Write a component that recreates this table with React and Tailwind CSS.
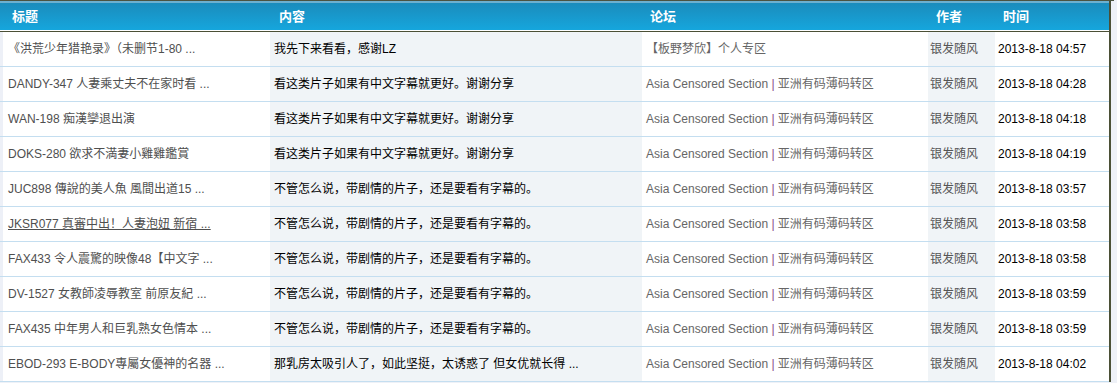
import React from 'react';

const rows = [
  { title: '《洪荒少年猎艳录》（未删节1-80 ...', content: '我先下来看看，感谢LZ', forum: '【板野梦欣】个人专区', time: '2013-8-18 04:57' },
  { title: 'DANDY-347 人妻乘丈夫不在家时看 ...', content: '看这类片子如果有中文字幕就更好。谢谢分享', forum: 'asia', time: '2013-8-18 04:28' },
  { title: 'WAN-198 痴漢孿退出演', content: '看这类片子如果有中文字幕就更好。谢谢分享', forum: 'asia', time: '2013-8-18 04:18' },
  { title: 'DOKS-280 欲求不満妻小雞雞鑑賞', content: '看这类片子如果有中文字幕就更好。谢谢分享', forum: 'asia', time: '2013-8-18 04:19' },
  { title: 'JUC898 傳說的美人魚 風間出道15 ...', content: '不管怎么说，带剧情的片子，还是要看有字幕的。', forum: 'asia', time: '2013-8-18 03:57' },
  { title: 'JKSR077 真審中出！人妻泡妞 新宿 ...', content: '不管怎么说，带剧情的片子，还是要看有字幕的。', forum: 'asia', time: '2013-8-18 03:58', hover: true },
  { title: 'FAX433 令人震驚的映像48【中文字 ...', content: '不管怎么说，带剧情的片子，还是要看有字幕的。', forum: 'asia', time: '2013-8-18 03:58' },
  { title: 'DV-1527 女教師凌辱教室 前原友紀 ...', content: '不管怎么说，带剧情的片子，还是要看有字幕的。', forum: 'asia', time: '2013-8-18 03:59' },
  { title: 'FAX435 中年男人和巨乳熟女色情本 ...', content: '不管怎么说，带剧情的片子，还是要看有字幕的。', forum: 'asia', time: '2013-8-18 03:59' },
  { title: 'EBOD-293 E-BODY專屬女優神的名器 ...', content: '那乳房太吸引人了，如此坚挺，太诱惑了 但女优就长得 ...', forum: 'asia', time: '2013-8-18 04:02' },
];

export default function App() {
  return (
    <div className="w-[1117px] h-[383px] overflow-hidden bg-[#eef1f7] text-[12px] font-['Liberation_Sans','Noto_Sans_CJK_SC',sans-serif]">
      <div className="flex w-[1114px] border-t border-[#4b5340]">
        <div className="w-[1111px] border-r-[2px] border-[#4b5036]">
          {/* header */}
          <div className="border-t-2 border-[#6cb0d0]">
            <div className="flex h-[27px] items-center bg-gradient-to-b from-[#1a8cbc] to-[#15a6dd] text-[13px] font-bold text-white">
              <div className="w-[270px] pl-[12px]">标题</div>
              <div className="w-[372px] pl-[9px]">内容</div>
              <div className="w-[286px] pl-[8px]">论坛</div>
              <div className="w-[67px] pl-[8px]">作者</div>
              <div className="flex-1 pl-[8px]">时间</div>
            </div>
            <div className="h-px bg-white" />
            <div className="h-px bg-[#4b5036]" />
          </div>
          {/* rows */}
          {rows.map((r, i) => (
            <div key={i} className="flex h-[35px] border-b border-[#c4def0] bg-white">
              <div className="flex w-[270px] items-center border-l-[3px] border-[#edf0f7] pl-[5px] text-[#4f4f4f]">
                <span className={r.hover ? 'underline' : ''}>{r.title}</span>
              </div>
              <div className="flex w-[372px] items-center bg-[#f0f4f7] pl-[4px] text-black">{r.content}</div>
              <div className="flex w-[286px] items-center pl-[4px] text-[#666]">
                {r.forum === 'asia' ? (
                  <span>
                    Asia Censored Section <span className="text-[#8a4a8a]">|</span> 亚洲有码薄码转区
                  </span>
                ) : (
                  r.forum
                )}
              </div>
              <div className="flex w-[67px] items-center bg-[#f0f4f7] pl-[2px] text-[#555]">银发随风</div>
              <div className="flex flex-1 items-center pl-[3px] text-black">{r.time}</div>
            </div>
          ))}
        </div>
      </div>
    </div>
  );
}
